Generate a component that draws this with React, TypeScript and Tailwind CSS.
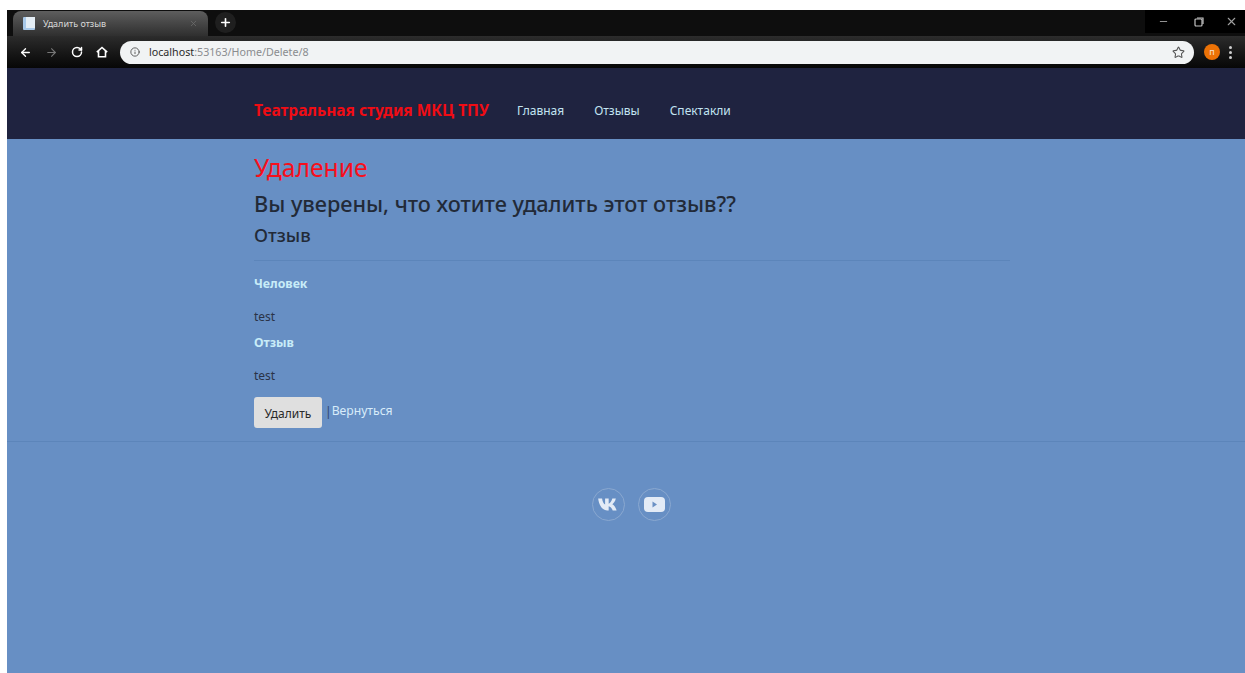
import React from 'react';
import { ArrowLeft, ArrowRight, RotateCw, Info, Star, Minus, X, Plus } from 'lucide-react';

const sans = "font-['Noto_Sans',sans-serif]";

const BrowserChrome = () => (
  <div className="h-[58px] shrink-0 flex flex-col bg-[#0b0b0b]">
    <div className="h-[26px] flex items-end relative bg-[#0e0e0e]">
      <div className="ml-[6px] w-[195px] h-[25px] rounded-t-[8px] bg-gradient-to-b from-[#5e5e5e] to-[#2f2f2f] flex items-center pl-[10px] pr-[10px]">
        <svg width="12" height="13" viewBox="0 0 12 13" className="shrink-0">
          <rect x="0" y="0" width="12" height="13" rx="1" fill="#a8c8e8" />
          <rect x="3" y="0" width="9" height="11" fill="#e4edf5" />
        </svg>
        <span className={`ml-[8px] text-[9px] text-[#d8d8d8] ${sans}`}>Удалить отзыв</span>
        <X size={9} className="ml-auto text-[#6d6d6d]" strokeWidth={2} />
      </div>
      <div className="ml-[7px] mb-[3px] w-[21px] h-[21px] rounded-full bg-[#1f1f1f] flex items-center justify-center">
        <Plus size={13} strokeWidth={3} className="text-white" />
      </div>
      <div className="ml-auto self-start h-[23px] w-[100px] flex items-center bg-black text-[#a0a0a0]">
        <div className="w-[36px] flex justify-center"><Minus size={11} /></div>
        <div className="w-[36px] flex justify-center">
          <svg width="10" height="10" viewBox="0 0 10 10" fill="none" stroke="#c4c4c4" strokeWidth="1.2">
            <rect x="1" y="2" width="7" height="7" rx="1" />
            <path d="M3 1h6v6" />
          </svg>
        </div>
        <div className="w-[28px] flex justify-center"><X size={13} /></div>
      </div>
    </div>
    <div className="h-[32px] flex items-center bg-gradient-to-b from-[#2c2c2c] to-[#070707]">
      <div className="w-[113px] pl-[12px] flex items-center gap-[13px] text-white shrink-0">
        <ArrowLeft size={13} strokeWidth={2.5} />
        <ArrowRight size={13} strokeWidth={2} className="text-[#777777]" />
        <RotateCw size={12} strokeWidth={3} />
        {/* plain house outline, no door */}
        <svg width="12" height="12" viewBox="0 0 12 12" fill="none" stroke="currentColor" strokeWidth="1.6">
          <path d="M.8 6.200 6 1.500l5.200 4.700M2.500 5v5.700h7V5" />
        </svg>
      </div>
      <div className="w-[1074px] h-[23px] rounded-full bg-[#f1f3f4] flex items-center pl-[10px] pr-[9px] shrink-0">
        <Info size={10} className="text-[#444444]" strokeWidth={2} />
        <span className={`ml-[9px] text-[10.700px] text-[#8a8c8f] ${sans}`}>
          <span className="text-[#2b2b2b]">localhost</span>:53163/Home/Delete/8
        </span>
        <Star size={13} strokeWidth={2} className="ml-auto text-[#555555]" />
      </div>
      <div className={`ml-[10px] w-[16px] h-[16px] rounded-full bg-[#ec7206] flex items-center justify-center text-[9px] text-[#f5e6d5] ${sans}`}>п</div>
      <div className="ml-[9px] flex flex-col gap-[2px]">
        <span className="w-[3px] h-[3px] rounded-full bg-[#cfcfcf]" />
        <span className="w-[3px] h-[3px] rounded-full bg-[#cfcfcf]" />
        <span className="w-[3px] h-[3px] rounded-full bg-[#cfcfcf]" />
      </div>
    </div>
  </div>
);

const Navbar = () => (
  <nav className="h-[71px] shrink-0 bg-[#1f2340] flex items-center pl-[247px] pt-[14px]">
    <a className="text-[15.500px] font-bold text-[#f00c14] mr-[28px] leading-none">Театральная студия МКЦ ТПУ</a>
    <ul className="flex gap-[30px] text-[12px] text-[#c2e3f2] leading-none">
      <li>Главная</li>
      <li>Отзывы</li>
      <li>Спектакли</li>
    </ul>
  </nav>
);

const Field = ({ label, value }: { label: string; value: string }) => (
  <dl>
    <dt className="h-[33px] text-[12.300px] font-bold text-[#c8ecf8] leading-[20px]">{label}</dt>
    <dd className="h-[26px] text-[12px] text-[#2a3347] leading-[20px]">{value}</dd>
  </dl>
);

const DeleteReview = () => (
  <main className="pl-[247px] w-[1003px]">
    <h1 className="text-[24.700px] leading-[30px] text-[#f70f1c] mt-[14px]">Удаление</h1>
    <h3 className="text-[21.700px] leading-[28px] text-[#222a38] font-medium mt-[7px]">Вы уверены, что хотите удалить этот отзыв??</h3>
    <h4 className="text-[18.300px] leading-[24px] text-[#222a38] font-medium mt-[5px]">Отзыв</h4>
    <hr className="mt-[13px] mb-[13px] border-t border-[#5c85ba]" />
    <Field label="Человек" value="test" />
    <Field label="Отзыв" value="test" />
    <div className="flex items-center mt-[5px]">
      <button className="w-[68px] h-[31px] pt-[2px] rounded-[3px] bg-[#dfdfdf] text-[12px] text-[#2a2a2a]">Удалить</button>
      <span className="ml-[3px] text-[12px] text-[#2f4468] -mt-[2px]">|</span>
      <a className="text-[12.200px] text-[#d8ecfa] -mt-[2px]">Вернуться</a>
    </div>
  </main>
);

const Footer = () => (
  <footer className="mt-[13px] border-t border-[#5c85ba] flex justify-center gap-[13px] pt-[46px] pl-[11px]">
    <a className="w-[33px] h-[33px] rounded-full border border-[#8aa8d0] flex items-center justify-center">
      <svg width="22" height="13" viewBox="0 0 20 12" fill="#e3ebf6">
        <path d="M0 .5h3.6c.3 2.6 1.4 5 2.8 5.6V.5h3.3v4.7c1.5-.4 2.7-2.4 3.4-4.7h3.2c-.5 2.6-2 4.4-3.2 5.3 1.4.8 3.1 2.6 3.9 5.7h-3.6c-.6-2.1-2.1-3.7-3.7-4v4h-1.2C4.3 11.500.9 7.600 0 .5z" />
      </svg>
    </a>
    <a className="w-[33px] h-[33px] rounded-full border border-[#8aa8d0] flex items-center justify-center">
      <svg width="21" height="15" viewBox="0 0 21 15">
        <rect width="21" height="15" rx="4" fill="#e3ebf6" />
        <path d="M8.500 4.500v6l4.500-3z" fill="#6a90c4" />
      </svg>
    </a>
  </footer>
);

export default function App() {
  return (
    <div className={`h-[673px] w-[1245px] overflow-hidden bg-white pt-[10px] pl-[7px] ${sans}`}>
      <div className="h-full flex flex-col bg-[#678fc4]">
        <BrowserChrome />
        <Navbar />
        <DeleteReview />
        <Footer />
      </div>
    </div>
  );
}
